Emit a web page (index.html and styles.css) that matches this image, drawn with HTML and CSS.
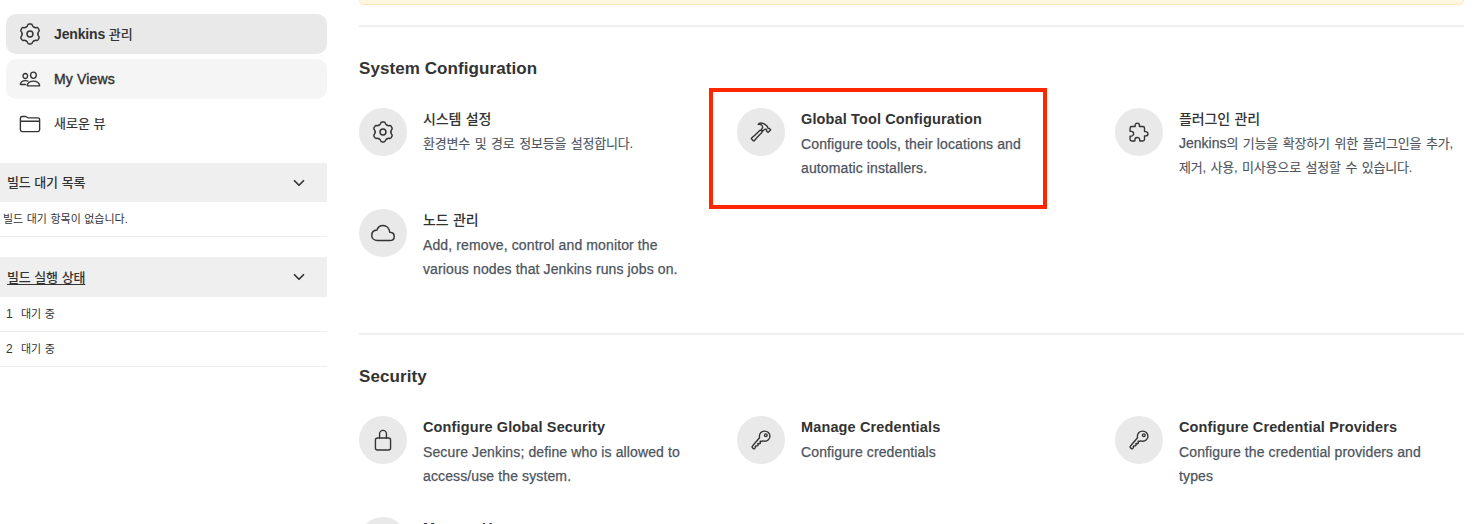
FILE: index.html
```
<!DOCTYPE html>
<html lang="ko">
<head>
<meta charset="utf-8">
<title>Jenkins 관리</title>
<link rel="stylesheet" href="styles.css">
</head>
<body>
<svg class="sprite" aria-hidden="true">
  <defs>
    <path id="tooth" d="M7.7 4.55C8.8 3.93 9.1 3.7 9.3 2.9Q9.7 1.2 11 1.2H13Q14.3 1.2 14.7 2.9C14.9 3.7 15.2 3.93 16.3 4.55"/>
    <symbol id="gear" viewBox="0 0 24 24">
      <use href="#tooth"/><use href="#tooth" transform="rotate(60 12 12)"/><use href="#tooth" transform="rotate(120 12 12)"/><use href="#tooth" transform="rotate(180 12 12)"/><use href="#tooth" transform="rotate(240 12 12)"/><use href="#tooth" transform="rotate(300 12 12)"/>
      <circle cx="12" cy="12" r="3.2"/>
    </symbol>
    <symbol id="people" viewBox="0 0 512 512">
      <path d="M402 168c-2.93 40.67-33.1 72-66 72s-63.12-31.32-66-72c-3-42.31 26.37-72 66-72s69 30.46 66 72zM336 304c-65.17 0-127.84 32.37-143.54 95.41-2.08 8.34 3.15 16.59 11.72 16.59h263.65c8.57 0 13.77-8.25 11.72-16.59C463.85 335.36 401.18 304 336 304zM200 185.94c-2.34 32.48-26.72 58.06-53 58.06s-50.7-25.57-53-58.06C91.61 152.15 115.34 128 147 128s55.39 24.77 53 57.94zM206 306c-18.05-8.27-37.93-11.45-59-11.45-52 0-102.1 25.85-114.65 76.2-1.65 6.66 2.53 13.25 9.37 13.25H154"/>
    </symbol>
    <symbol id="folder" viewBox="0 0 512 512">
      <path d="M440 432H72a40 40 0 01-40-40V120a40 40 0 0140-40h75.89a40 40 0 0122.19 6.72l27.84 18.56a40 40 0 0022.19 6.72H440a40 40 0 0140 40v240a40 40 0 01-40 40zM32 192h448"/>
    </symbol>
    <symbol id="chevron" viewBox="0 0 512 512"><path d="M112 184l144 144 144-144"/></symbol>
    <symbol id="hammer" viewBox="0 0 512 512">
      <path d="M277.42 247a24.68 24.68 0 00-4.08-5.47L255 223.44a21.63 21.63 0 00-6.56-4.57 20.93 20.93 0 00-23.28 4.27c-6.36 6.26-18 17.68-39 38.43C146 301.3 71.43 367.89 37.71 396.29a16 16 0 00-1.09 23.54l39 39.43a16.13 16.13 0 0023.67-.89c29.24-34.37 96.3-109 136-148.23 20.39-20.06 31.82-31.58 38.29-37.94a21.76 21.76 0 003.84-25.2zM478.43 201l-34.31-34a5.44 5.44 0 00-4-1.59 5.59 5.59 0 00-4 1.59h0a11.41 11.41 0 01-9.55 3.27c-4.48-.49-9.25-1.88-12.33-4.86-7-6.86 1.09-20.36-5.07-29a242.88 242.88 0 00-23.08-26.72c-7.06-7-34.81-33.47-81.55-52.53a123.79 123.79 0 00-47-9.24c-26.35 0-46.61 11.76-54 18.51-5.88 5.32-12 13.77-12 13.77a91.29 91.29 0 0110.81-3.2 79.53 79.53 0 0123.28-1.49C241.19 76.8 259.94 84.1 270 92c16.21 13 23.18 30.39 24.27 52.83.8 16.69-15.23 37.76-30.44 54.94a7.85 7.85 0 00.4 10.83l21.24 21.23a8 8 0 0011.14.1c13.93-13.51 31.09-28.47 40.82-34.46s17.58-7.68 21.35-8.09a35.71 35.71 0 0121.3 4.62 13.65 13.65 0 013.08 2.38c6.46 6.56 6.07 17.28-.5 23.74l-2 1.89a5.5 5.5 0 000 7.84l34.31 34a5.5 5.5 0 004 1.58 5.65 5.65 0 004-1.58L478.43 209a5.67 5.67 0 000-8z"/>
    </symbol>
    <symbol id="puzzle" viewBox="0 0 512 512">
      <path d="M413.66 246.1H386a2 2 0 01-2-2v-77.24A38.86 38.86 0 00345.14 128H267.9a2 2 0 01-2-2V98.34c0-27.14-21.5-49.86-48.64-50.33a49.53 49.53 0 00-50.4 49.51V126a2 2 0 01-2 2H87.62A39.74 39.74 0 0048 167.62V238a2 2 0 002 2h26.91c29.37 0 53.68 25.48 54.09 54.85.42 29.87-23.51 57.15-53.29 57.15H50a2 2 0 00-2 2v70.38A39.74 39.74 0 0087.62 464H158a2 2 0 002-2v-20.93c0-30.28 24.75-56.35 55-57.06 30.1-.7 57 20.31 57 50.28V462a2 2 0 002 2h71.14A38.86 38.86 0 00384 425.14v-78a2 2 0 012-2h28.48c27.63 0 49.52-22.67 49.52-50.4s-23.2-48.64-50.34-48.64z"/>
    </symbol>
    <symbol id="cloud" viewBox="0 0 512 512">
      <path d="M400 240c-8.89-89.54-71-144-144-144-69 0-113.44 48.2-128 96-60 6-112 43.59-112 112 0 66 54 112 120 112h260c55 0 100-27.44 100-88 0-59.82-53-85.76-96-88z"/>
    </symbol>
    <symbol id="lock" viewBox="0 0 512 512">
      <path d="M336 208v-95a80 80 0 00-160 0v95"/><rect x="80" y="208" width="352" height="280" rx="48"/>
    </symbol>
    <symbol id="key" viewBox="0 0 512 512">
      <path d="M218.1 167.17c0 13 0 25.6 4.1 37.4-43.1 50.6-156.9 184.3-167.5 194.5a20.17 20.17 0 00-6.7 15c0 8.5 5.2 16.7 9.6 21.3 6.6 6.9 34.8 33 40 28 15.4-15 18.5-19 24.8-25.2 9.5-9.3-1-28.3 2.3-36s6.8-9.2 12.5-10.4 15.8 2.9 23.7 3c8.3.1 12.8-3.4 19-9.2 5-4.6 8.6-8.9 8.7-15.6.2-9-12.8-20.9-3.1-30.4s23.7 6.2 34 5 22.8-15.5 24.1-21.6-11.7-21.8-9.7-30.7c.7-3 6.8-10 11.4-11s25 6.9 29.6 5.9c5.6-1.2 12.1-7.1 17.4-10.4 15.5 6.7 29.6 9.4 47.7 9.4 68.5 0 124-53.4 124-119.2S408.5 48 340 48s-121.9 53.37-121.9 119.17zM400 144a32 32 0 11-32-32 32 32 0 0132 32z"/>
    </symbol>
  </defs>
</svg>

<div class="page">
  <aside class="sidebar">
    <nav class="tasks">
      <a class="task task-active"><svg class="icon gear"><use href="#gear"/></svg><span class="task-label">Jenkins <span class="ko">관리</span></span></a>
      <a class="task task-hover"><svg class="icon"><use href="#people"/></svg><span class="task-label views">My Views</span></a>
      <a class="task"><svg class="icon"><use href="#folder"/></svg><span class="task-label new-view">새로운 뷰</span></a>
    </nav>
    <section class="pane queue">
      <h2 class="pane-header"><span class="pane-title">빌드 대기 목록</span><svg class="chevron"><use href="#chevron"/></svg></h2>
      <p class="pane-row empty">빌드 대기 항목이 없습니다.</p>
    </section>
    <section class="pane">
      <h2 class="pane-header executors"><span class="pane-title link">빌드 실행 상태</span><svg class="chevron"><use href="#chevron"/></svg></h2>
      <p class="pane-row"><span class="num">1</span>대기 중</p>
      <p class="pane-row"><span class="num">2</span>대기 중</p>
    </section>
  </aside>

  <main class="content">
    <div class="alert"></div>
    <section class="group">
      <h2 class="group-title">System Configuration</h2>
      <div class="items">
        <a class="item"><span class="badge"><svg class="icon gear"><use href="#gear"/></svg></span><div><h3 class="name ko-name">시스템 설정</h3><p class="desc ko-desc">환경변수 및 경로 정보등을 설정합니다.</p></div></a>
        <a class="item marked"><span class="badge"><svg class="icon"><use href="#hammer"/></svg></span><div><h3 class="name">Global Tool Configuration</h3><p class="desc">Configure tools, their locations and<br>automatic installers.</p></div></a>
        <a class="item"><span class="badge"><svg class="icon"><use href="#puzzle"/></svg></span><div><h3 class="name ko-name">플러그인 관리</h3><p class="desc ko-desc"><span class="latin">Jenkins</span>의 기능을 확장하기 위한 플러그인을 추가,<br>제거, 사용, 미사용으로 설정할 수 있습니다.</p></div></a>
        <a class="item"><span class="badge"><svg class="icon cloud"><use href="#cloud"/></svg></span><div><h3 class="name ko-name">노드 관리</h3><p class="desc">Add, remove, control and monitor the<br>various nodes that Jenkins runs jobs on.</p></div></a>
      </div>
    </section>
    <section class="group">
      <h2 class="group-title">Security</h2>
      <div class="items">
        <a class="item"><span class="badge"><svg class="icon"><use href="#lock"/></svg></span><div><h3 class="name">Configure Global Security</h3><p class="desc">Secure Jenkins; define who is allowed to<br>access/use the system.</p></div></a>
        <a class="item"><span class="badge"><svg class="icon"><use href="#key"/></svg></span><div><h3 class="name">Manage Credentials</h3><p class="desc">Configure credentials</p></div></a>
        <a class="item"><span class="badge"><svg class="icon"><use href="#key"/></svg></span><div><h3 class="name">Configure Credential Providers</h3><p class="desc">Configure the credential providers and<br>types</p></div></a>
        <a class="item"><span class="badge"></span><div><h3 class="name">Manage Users</h3></div></a>
      </div>
    </section>
  </main>
</div>
</body>
</html>
```

FILE: styles.css
```
*, *::after { box-sizing: border-box; }
body { margin: 0; background: #fff; color: #333; font-family: "Liberation Sans", "Noto Sans CJK KR", sans-serif; font-size: 14px; }
h2, h3, p { margin: 0; font-weight: 400; }
.sprite { display: none; }
.page { display: flex; width: 1464px; height: 524px; overflow: hidden; white-space: nowrap; }

.sidebar { width: 327px; flex: none; }
.tasks { display: flex; flex-direction: column; gap: 5px; padding: 14px 0 0 6px; }
.task { display: flex; align-items: center; gap: 13px; height: 40px; padding-left: 13px; border-radius: 10px; }
.task-active { background: #e9e9e9; font-weight: 700; }
.task-hover { background: #f5f5f5; }
.task-label { font-size: 14px; line-height: 20px; -webkit-text-stroke: .4px; }
.task-active .task-label { letter-spacing: -.15px; -webkit-text-stroke: 0; }
.views { letter-spacing: .15px; }
.ko { font-size: 13px; font-weight: 500; letter-spacing: 0; }
.new-view { font-size: 13px; padding-bottom: 1px; -webkit-text-stroke: .2px; }
.icon { width: 22px; height: 22px; flex: none; fill: none; stroke: #333; stroke-width: 32; stroke-linecap: round; stroke-linejoin: round; }
.icon.gear { stroke-width: 1.6; }

.queue { margin: 19px 0 20px; }
.pane-header { display: flex; align-items: center; justify-content: space-between; height: 39px; padding: 0 20px 0 7px; background: #efefef; font-size: 13px; font-weight: 500; letter-spacing: -.2px; word-spacing: .4px; }
.pane-header.executors { height: 40px; }
.pane-title { padding-bottom: 2px; }
.link { text-decoration: underline; text-underline-offset: 2px; }
.chevron { width: 16px; height: 16px; fill: none; stroke: #333; stroke-width: 56; stroke-linecap: round; stroke-linejoin: round; }
.pane-row { display: flex; align-items: center; height: 35px; padding: 0 0 3px 6px; border-bottom: 1px solid #ededed; font-size: 11px; word-spacing: .4px; }
.empty { padding-left: 3px; }
.num { width: 15px; padding-top: 2px; font-size: 12px; }

.content { width: 1105px; margin-left: 32px; }
.alert { height: 5px; margin-bottom: 20px; background: #fdf8df; border: 1px solid #fbe6b8; border-top: 0; border-radius: 0 0 8px 8px; }
.group { height: 308px; border-top: 2px solid #efefef; padding-top: 30px; }
.group-title { font-size: 17px; font-weight: 700; line-height: 24px; letter-spacing: .08px; }
.items { display: grid; grid-template-columns: repeat(3, 349px); gap: 29px; margin-top: 27px; }
.item { display: flex; gap: 16px; height: 72px; position: relative; }
.badge { display: flex; align-items: center; justify-content: center; width: 48px; height: 48px; flex: none; border-radius: 50%; background: #e9e9e9; }
.name { margin-top: -1px; font-size: 14.5px; font-weight: 700; line-height: 24px; letter-spacing: .13px; padding-bottom: 1px; }
.ko-name { font-weight: 500; font-size: 14px; letter-spacing: -.15px; word-spacing: .8px; }
.desc { color: #4d545d; font-size: 14px; line-height: 24px; letter-spacing: .12px; -webkit-text-stroke: .25px; }
.ko-desc { font-size: 13px; letter-spacing: -.2px; word-spacing: 1.2px; -webkit-text-stroke: .1px; }
.latin { font-size: 14px; letter-spacing: 0; line-height: 1; -webkit-text-stroke: .25px; }
.icon.cloud { width: 24px; height: 24px; }
.marked::after { content: ""; position: absolute; left: -28px; top: -20px; width: 338px; height: 121px; border: 4px solid #ff2600; }
```
